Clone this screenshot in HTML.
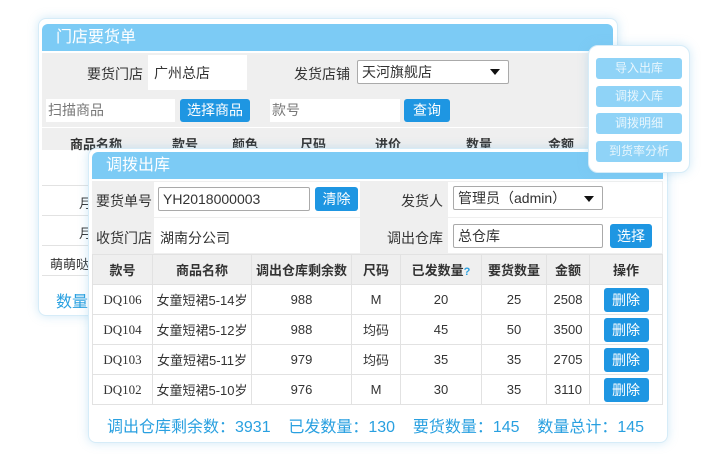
<!DOCTYPE html><html><head><meta charset="utf-8"><style>
*{margin:0;padding:0;box-sizing:border-box}
body{width:726px;height:468px;background:#fff;position:relative;overflow:hidden;font-family:"Liberation Sans","Noto Sans CJK SC",sans-serif;font-size:13px;color:#333}
.a{position:absolute}
.panel{background:#fff;border:1px solid #d6ecf8;border-radius:8px;box-shadow:0 0 10px rgba(120,190,230,.35)}
.hd{background:#7ccbf5;color:#fff;font-size:16px;line-height:27px;padding-left:14px;border-radius:6px 6px 0 0}
.g{background:#efefef}
.w{background:#fff}
.btn{background:#1e96e2;color:#fff;border-radius:3px;text-align:center;font-size:14px}
.inp{background:#fff;border:1px solid #aaa;border-radius:2px;padding-left:4px;font-size:14px}
.tri{position:absolute;width:0;height:0;border-left:5px solid transparent;border-right:5px solid transparent;border-top:6px solid #111}
table{border-collapse:collapse;position:absolute}
td{border:1px solid #e2e2e2;text-align:center;font-size:13px;height:30px;padding:0}
.side{background:#8fd3f7;color:#e8f6fd;font-size:12px;text-align:center;line-height:21px;border-radius:3px;width:86px;height:21px;left:596px}
</style></head><body>

<!-- back panel -->
<div class="a panel" style="left:38px;top:18px;width:580px;height:298px"></div>
<div class="a hd" style="left:42px;top:24px;width:571px;height:27px">门店要货单</div>
<div class="a g" style="left:42px;top:53px;width:571px;height:74px"></div>
<div class="a" style="left:42px;top:64px;width:101px;text-align:right;font-size:14px">要货门店</div>
<div class="a w" style="left:148px;top:55px;width:99px;height:35px;font-size:14px;padding:8px 0 0 6px">广州总店</div>
<div class="a" style="left:250px;top:64px;width:100px;text-align:right;font-size:14px">发货店铺</div>
<div class="a inp" style="left:357px;top:60px;width:152px;height:24px;line-height:22px">天河旗舰店</div>
<div class="tri" style="left:490px;top:69px"></div>
<div class="a w" style="left:46px;top:99px;width:129px;height:23px;color:#777;font-size:14px;line-height:23px;padding-left:2px">扫描商品</div>
<div class="a btn" style="left:180px;top:99px;width:70px;height:23px;line-height:23px">选择商品</div>
<div class="a w" style="left:270px;top:99px;width:130px;height:23px;color:#777;font-size:14px;line-height:23px;padding-left:2px">款号</div>
<div class="a btn" style="left:404px;top:99px;width:46px;height:23px;line-height:23px">查询</div>
<div class="a g" style="left:42px;top:128px;width:571px;height:22px;font-weight:bold;font-size:13px">
<span class="a" style="left:28px;top:6px">商品名称</span><span class="a" style="left:130px;top:6px">款号</span><span class="a" style="left:190px;top:6px">颜色</span><span class="a" style="left:258px;top:6px">尺码</span><span class="a" style="left:333px;top:6px">进价</span><span class="a" style="left:424px;top:6px">数量</span><span class="a" style="left:506px;top:6px">金额</span></div>
<div class="a" style="left:42px;top:185px;width:50px;border-top:1px solid #e2e2e2"></div>
<div class="a" style="left:42px;top:215px;width:50px;border-top:1px solid #e2e2e2"></div>
<div class="a" style="left:42px;top:245px;width:50px;border-top:1px solid #e2e2e2"></div>
<div class="a" style="left:42px;top:275px;width:50px;border-top:1px solid #e2e2e2"></div>
<div class="a" style="left:79px;top:193px">月</div>
<div class="a" style="left:79px;top:223px">月</div>
<div class="a" style="left:50px;top:254px">萌萌哒</div>
<div class="a" style="left:56px;top:288px;color:#29a0e0;font-size:16px">数量</div>

<!-- front panel -->
<div class="a panel" style="left:88px;top:148px;width:580px;height:295px"></div>
<div class="a hd" style="left:92px;top:152px;width:571px;height:27px;border-radius:6px 6px 0 0">调拨出库</div>
<div class="a g" style="left:92px;top:181px;width:571px;height:73px"></div>
<div class="a w" style="left:154px;top:182px;width:206px;height:35px"></div>
<div class="a w" style="left:448px;top:182px;width:214px;height:35px"></div>
<div class="a w" style="left:154px;top:218px;width:206px;height:35px"></div>
<div class="a w" style="left:448px;top:218px;width:214px;height:35px"></div>
<div class="a" style="left:96px;top:191px;font-size:14px">要货单号</div>
<div class="a inp" style="left:158px;top:187px;width:152px;height:24px;line-height:22px">YH2018000003</div>
<div class="a btn" style="left:315px;top:187px;width:43px;height:24px;line-height:24px">清除</div>
<div class="a" style="left:362px;top:191px;width:81px;text-align:right;font-size:14px">发货人</div>
<div class="a inp" style="left:453px;top:186px;width:150px;height:24px;line-height:22px">管理员（admin）</div>
<div class="tri" style="left:584px;top:196px"></div>
<div class="a" style="left:96px;top:228px;font-size:14px">收货门店</div>
<div class="a" style="left:160px;top:228px;font-size:14px">湖南分公司</div>
<div class="a" style="left:362px;top:228px;width:81px;text-align:right;font-size:14px">调出仓库</div>
<div class="a inp" style="left:453px;top:224px;width:150px;height:24px;line-height:22px">总仓库</div>
<div class="a btn" style="left:610px;top:224px;width:42px;height:24px;line-height:24px">选择</div>

<table style="left:92px;top:254px;width:571px">
<tr style="background:#efefef"><td style="width:60px;height:30px;font-weight:bold">款号</td><td style="width:99px;font-weight:bold">商品名称</td><td style="width:100px;font-weight:bold">调出仓库剩余数</td><td style="width:49px;font-weight:bold">尺码</td><td style="width:81px;font-weight:bold">已发数量<span style="color:#29a0e0;font-size:11px">?</span></td><td style="width:65px;font-weight:bold">要货数量</td><td style="width:43px;font-weight:bold">金额</td><td style="font-weight:bold">操作</td></tr>
<tr><td style="font-family:'Liberation Serif',serif">DQ106</td><td>女童短裙5-14岁</td><td>988</td><td>M</td><td>20</td><td>25</td><td>2508</td><td><div class="btn" style="width:45px;height:24px;line-height:24px;margin:auto">删除</div></td></tr>
<tr><td style="font-family:'Liberation Serif',serif">DQ104</td><td>女童短裙5-12岁</td><td>988</td><td>均码</td><td>45</td><td>50</td><td>3500</td><td><div class="btn" style="width:45px;height:24px;line-height:24px;margin:auto">删除</div></td></tr>
<tr><td style="font-family:'Liberation Serif',serif">DQ103</td><td>女童短裙5-11岁</td><td>979</td><td>均码</td><td>35</td><td>35</td><td>2705</td><td><div class="btn" style="width:45px;height:24px;line-height:24px;margin:auto">删除</div></td></tr>
<tr><td style="font-family:'Liberation Serif',serif">DQ102</td><td>女童短裙5-10岁</td><td>976</td><td>M</td><td>30</td><td>35</td><td>3110</td><td><div class="btn" style="width:45px;height:24px;line-height:24px;margin:auto">删除</div></td></tr>
</table>
<div class="a" style="left:107px;top:413px;color:#29a0e0;font-size:16px;white-space:nowrap">调出仓库剩余数：3931&nbsp;&nbsp;&nbsp;&nbsp;已发数量：130&nbsp;&nbsp;&nbsp;&nbsp;要货数量：145&nbsp;&nbsp;&nbsp;&nbsp;数量总计：145</div>

<!-- side panel (on top) -->
<div class="a panel" style="left:588px;top:45px;width:102px;height:128px;border-radius:10px"></div>
<div class="a side" style="top:58px">导入出库</div>
<div class="a side" style="top:86px">调拨入库</div>
<div class="a side" style="top:113px">调拨明细</div>
<div class="a side" style="top:141px">到货率分析</div>
</body></html>
